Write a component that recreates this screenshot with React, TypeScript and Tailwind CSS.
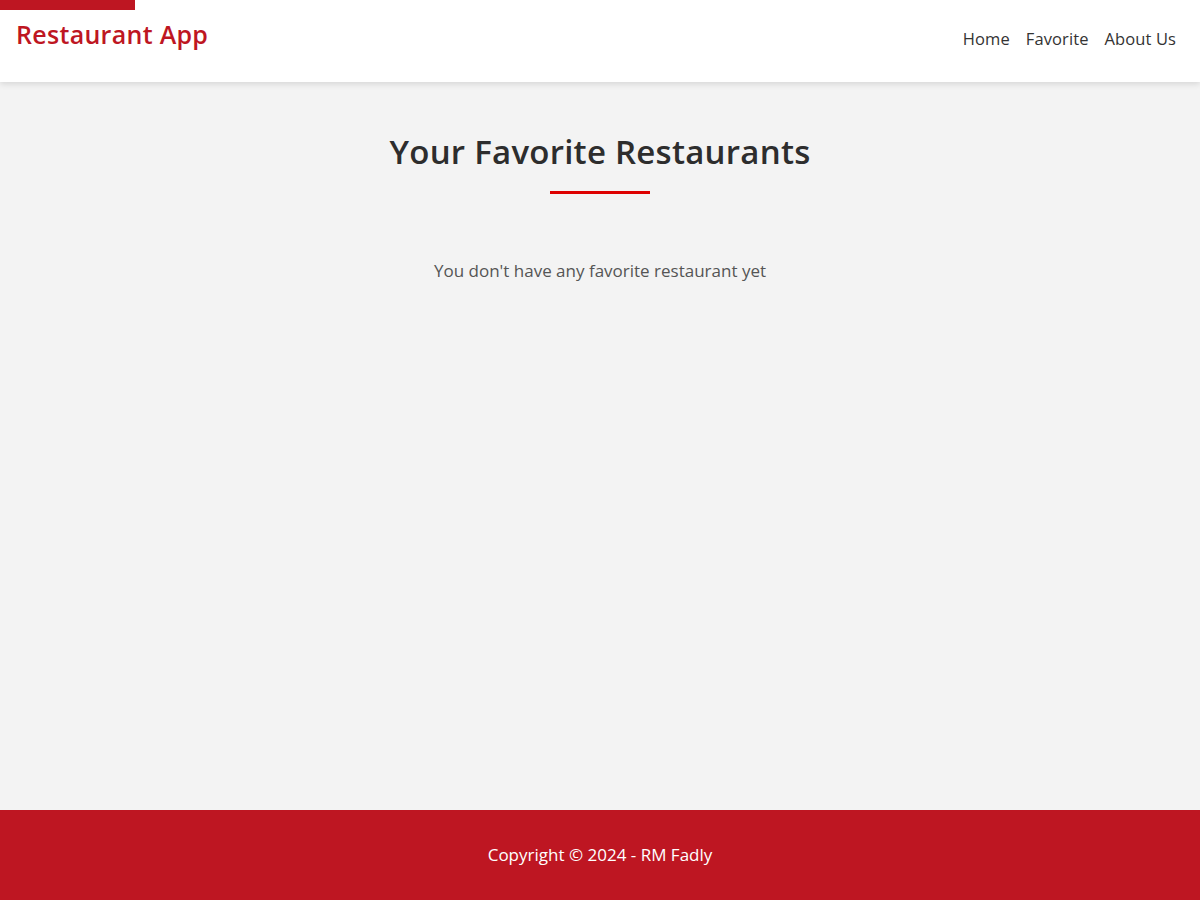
import React from "react";

export default function App() {
  return (
    <div
      className="min-h-screen flex flex-col bg-[#f3f3f3]"
      style={{ fontFamily: '"Open Sans", "Noto Sans", sans-serif' }}
    >
      <header className="relative bg-white h-[82px] shadow-[0_2px_6px_rgba(0,0,0,0.12)] flex items-start justify-between px-4 z-10">
        <div className="absolute left-0 top-0 w-[135px] h-[10px] bg-[#be1622]" />
        <div className="pt-[18px] text-[25px] tracking-[0.3px] font-semibold text-[#be1622] leading-[32px]">
          Restaurant App
        </div>
        <nav className="pt-[27px] pr-2 flex gap-4 text-[16.5px] tracking-[0.1px] text-[#333333] leading-[24px]">
          <a>Home</a>
          <a>Favorite</a>
          <a>About Us</a>
        </nav>
      </header>
      <main className="flex-1 flex flex-col items-center">
        <h1 className="mt-[50px] text-[33px] tracking-[0.25px] font-semibold text-[#2d2d2d] leading-[40px]">
          Your Favorite Restaurants
        </h1>
        <div className="mt-[19px] w-[100px] h-[3px] bg-[#dd0000]" />
        <p className="mt-[65px] text-[17px] text-[#555555] leading-[24px]">
          You don't have any favorite restaurant yet
        </p>
      </main>
      <footer className="h-[90px] bg-[#be1622] flex items-center justify-center text-white text-[17px] font-medium">
        Copyright © 2024 - RM Fadly
      </footer>
    </div>
  );
}
